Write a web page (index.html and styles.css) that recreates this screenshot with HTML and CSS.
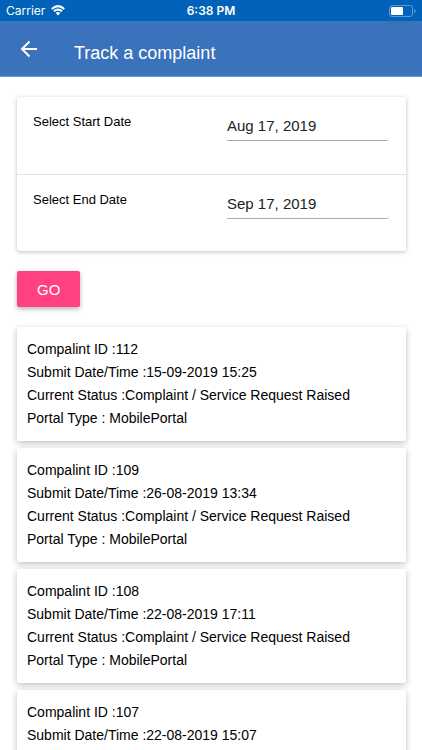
FILE: index.html
```html
<!DOCTYPE html>
<html lang="en">
<head>
<meta charset="utf-8">
<meta name="viewport" content="width=device-width, initial-scale=1">
<title>Track a complaint</title>
<link rel="stylesheet" href="styles.css">
</head>
<body>
<div class="status-bar">
  <div class="status-left">
    <span>Carrier</span>
    <svg class="wifi" viewBox="0 0 14 11" aria-hidden="true">
      <path d="M.7 3.900Q7-1.700 13.300 3.900M2.900 6.300Q7 2.900 11.100 6.300" fill="none" stroke="#fff" stroke-width="2"/>
      <path d="M4.600 7.800Q7 6 9.400 7.800L7 10.400Z" fill="#fff"/>
    </svg>
  </div>
  <span class="clock">6:38 PM</span>
  <div class="status-right">
    <svg class="battery" viewBox="0 0 27 12" aria-hidden="true">
      <rect x=".5" y=".5" width="23" height="11" rx="2.5" fill="none" stroke="#5c9ad3"/>
      <rect x="2" y="2" width="12" height="8" rx="1" fill="#fff"/>
      <path d="M25 4q1.600.5 1.600 2T25 8z" fill="#5c9ad3"/>
    </svg>
  </div>
</div>
<header class="toolbar">
  <button class="back" type="button" aria-label="Back">
    <svg viewBox="0 0 18 18" aria-hidden="true"><path d="M17 9H2M9.500 1.500L2 9l7.500 7.500" fill="none" stroke="#fff" stroke-width="2"/></svg>
  </button>
  <h1 class="title">Track a complaint</h1>
</header>
<main class="content">
  <form class="filter">
    <div class="panel">
      <div class="field">
        <label for="start">Select Start Date</label>
        <input id="start" type="text" value="Aug 17, 2019" readonly>
      </div>
      <div class="field">
        <label for="end">Select End Date</label>
        <input id="end" type="text" value="Sep 17, 2019" readonly>
      </div>
    </div>
    <button class="go" type="button">GO</button>
  </form>
  <section class="results">
    <article class="card">
      <p>Compalint ID :112</p>
      <p>Submit Date/Time :15-09-2019 15:25</p>
      <p>Current Status :Complaint / Service Request Raised</p>
      <p>Portal Type : MobilePortal</p>
    </article>
    <article class="card">
      <p>Compalint ID :109</p>
      <p>Submit Date/Time :26-08-2019 13:34</p>
      <p>Current Status :Complaint / Service Request Raised</p>
      <p>Portal Type : MobilePortal</p>
    </article>
    <article class="card">
      <p>Compalint ID :108</p>
      <p>Submit Date/Time :22-08-2019 17:11</p>
      <p>Current Status :Complaint / Service Request Raised</p>
      <p>Portal Type : MobilePortal</p>
    </article>
    <article class="card">
      <p>Compalint ID :107</p>
      <p>Submit Date/Time :22-08-2019 15:07</p>
    </article>
  </section>
</main>
</body>
</html>
```
FILE: styles.css
```css
* {
  box-sizing: border-box;
}

html {
  scrollbar-width: none;
}

body {
  margin: 0;
  background: #fff;
  color: #000;
  font-family: "Liberation Sans", Arial, sans-serif;
  font-size: 14px;
}

.status-bar {
  display: grid;
  grid-template-columns: 1fr auto 1fr;
  align-items: center;
  height: 21px;
  padding: 0 6px;
  background: #0062b8;
  color: #fff;
  font-family: Inter, sans-serif;
  font-size: 12px;
}

.status-left {
  display: flex;
  align-items: center;
  gap: 6px;
}

.status-right {
  display: flex;
  justify-content: flex-end;
}

.wifi {
  width: 14px;
  height: 11px;
}

.battery {
  width: 27px;
  height: 12px;
}

.clock {
  font-weight: 600;
}

.toolbar {
  display: flex;
  align-items: center;
  gap: 36px;
  height: 56px;
  padding: 0 20px;
  background: #3a72bb;
  border-bottom: 1px solid #7299cd;
  color: #fff;
}

.back {
  width: 18px;
  height: 18px;
  padding: 0;
  border: 0;
  background: none;
}

.back svg {
  display: block;
}

.title {
  margin: 8px 0 0;
  font-size: 18px;
  font-weight: 400;
  line-height: 24px;
}

.content {
  padding: 20px 16px 20px 17px;
}

.panel {
  border-radius: 3px;
  background: #fff;
  box-shadow: 0 1px 4px rgba(0, 0, 0, 0.26);
}

.field {
  display: grid;
  grid-template-columns: 194px 1fr;
  align-items: start;
  height: 77px;
  padding: 16px 17px 16px 16px;
}

.field + .field {
  border-top: 1px solid #e2e2e2;
}

.field label {
  font-size: 13px;
  line-height: 18px;
}

.field input {
  width: 100%;
  height: 28px;
  padding: 0 0 2px;
  border: 0;
  border-bottom: 1px solid #aaa;
  border-radius: 0 0 3px 0;
  background: none;
  color: #222;
  font: 15px "Liberation Sans", Arial, sans-serif;
}

.go {
  display: block;
  margin: 20px 0;
  padding: 0 20px;
  height: 36px;
  border: 0;
  border-radius: 2px;
  background: #ff4081;
  box-shadow: 0 2px 5px rgba(0, 0, 0, 0.3);
  color: #fff;
  font: 15px "Liberation Sans", Arial, sans-serif;
}

.results {
  display: flex;
  flex-direction: column;
  gap: 7px;
}

.card {
  padding: 11px 10px;
  border-radius: 2px;
  background: #fff;
  box-shadow: 0 2px 6px rgba(0, 0, 0, 0.25);
}

.card p {
  margin: 0;
  line-height: 23px;
}
```
